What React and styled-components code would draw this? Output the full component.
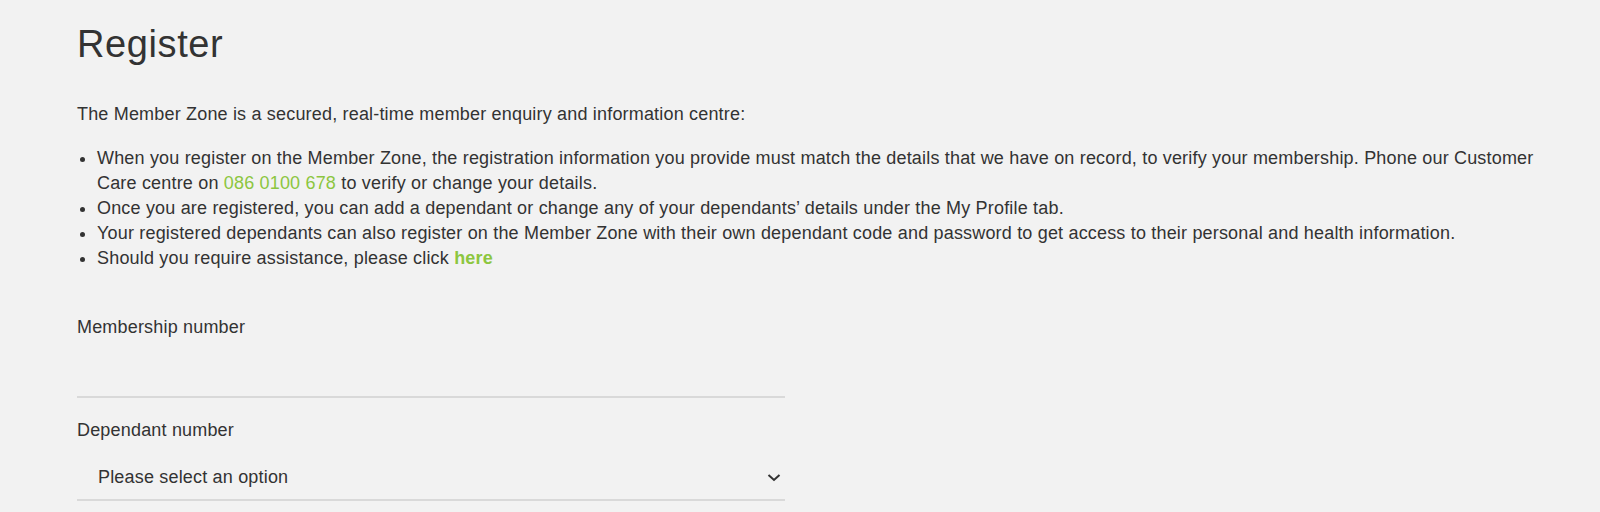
import React from 'react'
import styled, {createGlobalStyle} from 'styled-components'

const textColor = '#333'
const green = '#8cc63f'
const lineColor = '#d9d9d9'
const fieldWidth = 708

const GlobalStyle = createGlobalStyle`
  html, body {
    margin: 0;
    padding: 0;
    background: #f2f2f2;
  }
  body {
    font-family: 'Liberation Sans', Arial, sans-serif;
    color: ${textColor};
  }
`

const Page = styled.main`
  padding: 24px 40px 0 77px;
  font-size: 18px;
  line-height: 25px;
  letter-spacing: 0.18px;
`
const Title = styled.h1`
  margin: 0 0 36px;
  font-size: 38px;
  font-weight: normal;
  line-height: 1.1;
  letter-spacing: 0.6px;
  color: #333;
`
const Intro = styled.p`
  margin: 0 0 19px;
`
const Bullets = styled.ul`
  margin: 0 0 44px;
  padding-left: 20px;
`
const Link = styled.a`
  color: ${green};
  text-decoration: none;
  font-weight: ${p => (p.$bold ? 'bold' : 'normal')};
`
const Form = styled.form`
  display: flex;
  flex-direction: column;
  gap: 20px;
  width: ${fieldWidth}px;
`
const Field = styled.label`
  display: flex;
  flex-direction: column;
`
const Label = styled.span`
  display: block;
`
const Input = styled.input`
  box-sizing: border-box;
  height: 58px;
  border: none;
  border-bottom: 2px solid ${lineColor};
  background: transparent;
  font: inherit;
  letter-spacing: inherit;
  color: ${textColor};
  padding: 12px 21px 0;
  outline: none;
`
const SelectWrap = styled.div`
  position: relative;
  display: flex;
`
const Select = styled.select`
  box-sizing: border-box;
  flex: 1;
  height: 58px;
  border: none;
  border-bottom: 2px solid ${lineColor};
  border-radius: 0;
  background: transparent;
  appearance: none;
  font: inherit;
  letter-spacing: inherit;
  color: ${textColor};
  padding: 13px 21px 0;
  outline: none;
`
const Chevron = styled.svg`
  position: absolute;
  right: 4px;
  top: 31px;
  pointer-events: none;
`

export default () => (
  <React.Fragment>
    <GlobalStyle />
    <Page>
      <Title>Register</Title>
      <Intro>
        The Member Zone is a secured, real-time member enquiry and information
        centre:
      </Intro>
      <Bullets>
        <li>
          When you register on the Member Zone, the registration information you
          provide must match the details that we have on record, to verify your
          membership. Phone our Customer Care centre on{' '}
          <Link href="#">086 0100 678</Link> to verify or change your details.
        </li>
        <li>
          Once you are registered, you can add a dependant or change any of your
          dependants’ details under the My Profile tab.
        </li>
        <li>
          Your registered dependants can also register on the Member Zone with
          their own dependant code and password to get access to their personal
          and health information.
        </li>
        <li>
          Should you require assistance, please click{' '}
          <Link href="#" $bold>
            here
          </Link>
        </li>
      </Bullets>
      <Form>
        <Field>
          <Label>Membership number</Label>
          <Input type="text" />
        </Field>
        <Field as="div">
          <Label>Dependant number</Label>
          <SelectWrap>
            <Select defaultValue="">
              <option value="">Please select an option</option>
            </Select>
            <Chevron width="14" height="8" viewBox="0 0 14 8">
              <path d="M1.5 1 L7 6 L12.5 1" fill="none" stroke="#333" strokeWidth="2" />
            </Chevron>
          </SelectWrap>
        </Field>
      </Form>
    </Page>
  </React.Fragment>
)
